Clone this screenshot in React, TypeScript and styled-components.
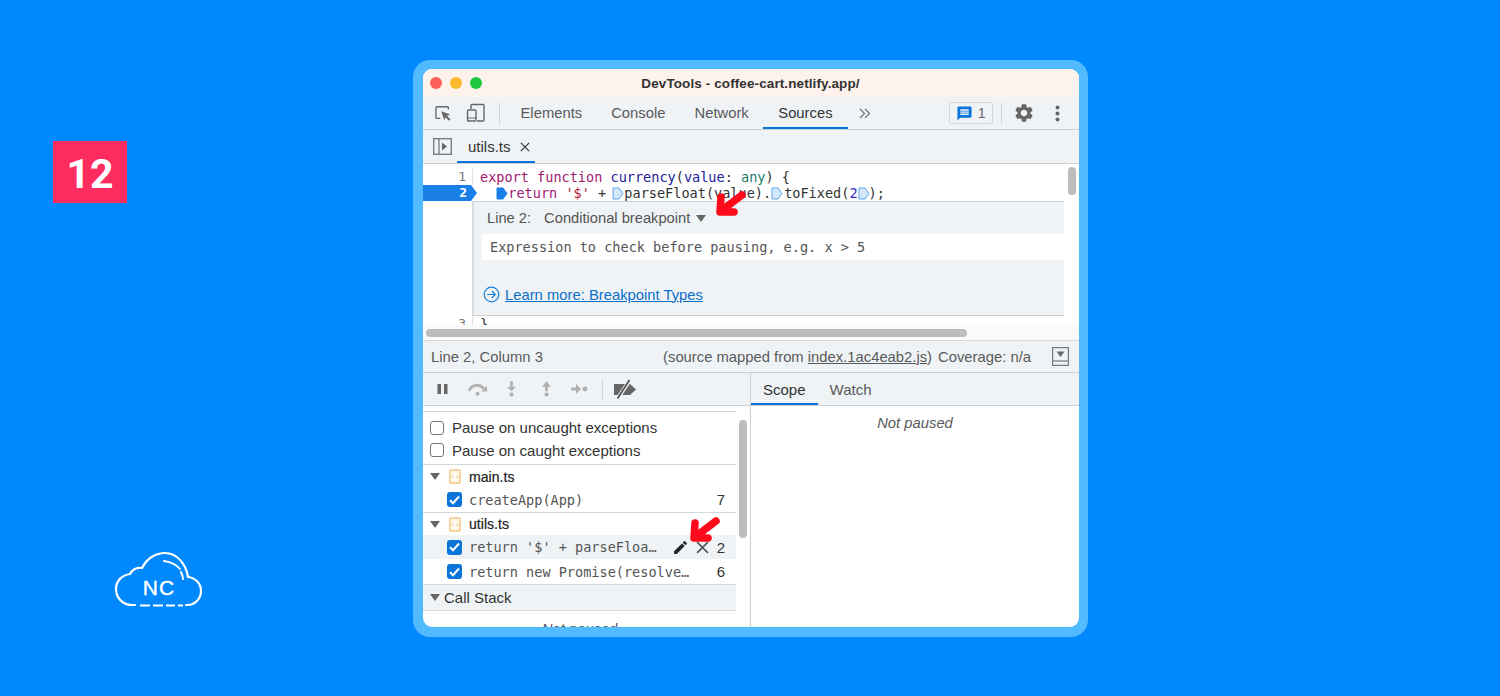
import React from 'react'
import styled, { createGlobalStyle } from 'styled-components'
import { MdSettings, MdEdit, MdMessage } from 'react-icons/md'

const GlobalStyle = createGlobalStyle`
  html, body {
    margin: 0;
    padding: 0;
    background: #0088ff;
    font-family: "Liberation Sans", Arial, sans-serif;
  }
`

const Page = styled.div`
  position: relative;
  width: 1500px;
  height: 696px;
  overflow: hidden;
  background: #0088ff;
  display: flex;
  align-items: center;
  justify-content: center;
`

const Badge = styled.div`
  position: absolute;
  left: 53px;
  top: 141px;
  width: 74px;
  height: 62px;
  box-sizing: border-box;
  padding-top: 3px;
  background: #ff2d5f;
  color: #fff;
  font-family: Roboto, "Liberation Sans", sans-serif;
  font-size: 41px;
  font-weight: 700;
  display: flex;
  align-items: center;
  justify-content: center;
`

const Logo = styled.svg`
  position: absolute;
  left: 105px;
  top: 540px;
`

const Frame = styled.div`
  width: 656px;
  height: 558px;
  padding: 9px 9px 10px 10px;
  margin: 1px 0 0 1px;
  background: #52bbff;
  border-radius: 17px;
  flex: none;
`

const Win = styled.div`
  position: relative;
  height: 558px;
  border-radius: 9px;
  overflow: hidden;
  background: #fff;
  display: flex;
  flex-direction: column;
`

const TitleBar = styled.div`
  height: 28px;
  flex: none;
  background: #fdf2ec;
  display: flex;
  align-items: center;
  padding-left: 7px;
  position: relative;
`

const Light = styled.span<{ $c: string }>`
  width: 12px;
  height: 12px;
  border-radius: 50%;
  background: ${p => p.$c};
  margin-right: 8px;
`

const Title = styled.div`
  flex: 1;
  text-align: center;
  font-size: 13.5px;
  font-weight: 700;
  color: #333;
  padding-right: 68px;
  letter-spacing: 0.1px;
`

const Bar = styled.div<{ $h: number }>`
  height: ${p => p.$h}px;
  flex: none;
  box-sizing: border-box;
  background: #eff3f6;
  border-bottom: 1px solid #ccd0d3;
  display: flex;
  align-items: stretch;
`

const IconCell = styled.div<{ $w: number; $ml?: number }>`
  width: ${p => p.$w}px;
  margin-left: ${p => p.$ml || 0}px;
  flex: none;
  display: flex;
  align-items: center;
  justify-content: center;
  color: #666;
`

const Divider = styled.div<{ $ml: number; $mr: number }>`
  width: 1px;
  height: 21px;
  align-self: center;
  background: #cfd3d6;
  margin: 0 ${p => p.$mr}px 0 ${p => p.$ml}px;
  flex: none;
`

const Tab = styled.div<{ $on?: boolean; $size?: number; $px?: number }>`
  padding: 0 ${p => p.$px ?? 14.5}px;
  display: flex;
  align-items: center;
  font-size: ${p => p.$size || 14.8}px;
  color: ${p => (p.$on ? '#333' : '#5a5a5a')};
  box-shadow: ${p => (p.$on ? 'inset 0 -2px 0 #0b74d9' : 'none')};
  white-space: nowrap;
`

const FileTab = styled(Tab)`
  margin-left: 5px;
  padding: 0 5px 0 11px;
`

const Close = styled.span`
  margin-left: 9px;
  display: flex;
`

const IssueButton = styled.div`
  width: 44px;
  height: 22px;
  box-sizing: border-box;
  align-self: center;
  margin-left: 78px;
  border: 1px solid #d5d9dc;
  border-radius: 2px;
  display: flex;
  align-items: center;
  justify-content: center;
  gap: 5px;
  font-size: 14px;
  color: #666;
`

const Editor = styled.div`
  position: relative;
  height: 176px;
  flex: none;
  overflow: hidden;
  padding-top: 5px;
  box-sizing: border-box;
  background: #fff;
  font-family: "DejaVu Sans Mono", "Liberation Mono", monospace;
  font-size: 13.55px;
`

const CodeLine = styled.div`
  height: 16px;
  line-height: 16px;
  display: flex;
  white-space: pre;
`

const LineNo = styled.div<{ $bp?: boolean }>`
  width: ${p => (p.$bp ? 54 : 50)}px;
  flex: none;
  box-sizing: border-box;
  text-align: right;
  padding-right: ${p => (p.$bp ? 10 : 6)}px;
  font-size: 13px;
  margin-right: ${p => (p.$bp ? 3 : 7)}px;
  color: ${p => (p.$bp ? '#fff' : '#777')};
  border-right: ${p => (p.$bp ? 'none' : '1px solid #dfe2e4')};
  background: ${p => (p.$bp ? '#1a80e8' : 'transparent')};
  font-weight: ${p => (p.$bp ? 700 : 400)};
  clip-path: ${p => (p.$bp ? 'polygon(0 0, 48px 0, 54px 50%, 48px 100%, 0 100%)' : 'none')};
`

const Kw = styled.span`
  color: #a3186f;
`
const Fn = styled.span`
  color: #1c1c9c;
`
const Ty = styled.span`
  color: #1a7c6c;
`
const Str = styled.span`
  color: #b5193a;
`
const Num = styled.span`
  color: #3a2fc2;
`
const Plain = styled.span`
  color: #333;
`

const Marker = styled.svg<{ $adv: number; $ml?: number }>`
  display: inline-block;
  vertical-align: -2px;
  width: 12px;
  height: 13px;
  margin-left: ${p => p.$ml || 0}px;
  margin-right: ${p => p.$adv - 12 - (p.$ml || 0)}px;
`

const Widget = styled.div`
  height: 115px;
  margin: 0 15px 0 49px;
  box-sizing: border-box;
  background: #eff3f6;
  border-top: 1px solid #ccd0d3;
  border-bottom: 1px solid #ccd0d3;
  border-left: 2px solid #d8dcdf;
  display: flex;
  flex-direction: column;
  padding-left: 8px;
  font-family: "Liberation Sans", Arial, sans-serif;
`

const WidgetHead = styled.div`
  height: 32px;
  flex: none;
  display: flex;
  align-items: center;
  font-size: 14.7px;
  color: #555;
  padding-left: 5px;
`

const ModeLabel = styled.span`
  margin-left: 13px;
`

const Caret = styled.span<{ $ml?: number }>`
  width: 0;
  height: 0;
  flex: none;
  border-left: 5px solid transparent;
  border-right: 5px solid transparent;
  border-top: 7px solid #666;
  margin-left: ${p => p.$ml || 0}px;
`

const ExprInput = styled.div`
  height: 26px;
  flex: none;
  background: #fff;
  display: flex;
  align-items: center;
  padding-left: 8px;
  font-family: "DejaVu Sans Mono", "Liberation Mono", monospace;
  font-size: 13.55px;
  color: #555;
`

const LearnMore = styled.div`
  display: flex;
  align-items: center;
  gap: 5px;
  margin-top: 26px;
  padding-left: 1px;
  font-size: 14.8px;
  color: #0b6fc9;
  text-decoration: underline;
`

const HScroll = styled.div`
  position: absolute;
  left: 3px;
  bottom: 3px;
  width: 541px;
  height: 8px;
  border-radius: 4px;
  background: #bdbdbd;
`

const HTrack = styled.div`
  position: absolute;
  left: 0;
  right: 0;
  bottom: 0;
  height: 15px;
  background: #fafafa;
`

const VScroll = styled.div`
  position: absolute;
  right: 3px;
  top: 3px;
  width: 8px;
  height: 28px;
  border-radius: 4px;
  background: #bdbdbd;
`

const Status = styled(Bar)`
  align-items: center;
  padding: 0 10px 0 8px;
  border-top: 1px solid #d5d9dc;
  font-size: 14.8px;
  color: #5a5a5a;
`

const Spacer = styled.div`
  flex: 1;
`

const Underlined = styled.span`
  text-decoration: underline;
`

const Coverage = styled.span`
  margin-left: 6px;
`

const Debugger = styled.div`
  flex: 1;
  min-height: 0;
  display: grid;
  grid-template-columns: 328px 1fr;
`

const LeftPane = styled.div`
  display: flex;
  flex-direction: column;
  border-right: 1px solid #ccd0d3;
  min-height: 0;
  overflow: hidden;
`

const RightPane = styled.div`
  display: flex;
  flex-direction: column;
  min-height: 0;
`

const Paused = styled.div<{ $pt: number }>`
  text-align: center;
  font-style: italic;
  font-size: 14.8px;
  color: #5a5a5a;
  padding-top: ${p => p.$pt}px;
`

const ListWrap = styled.div`
  position: relative;
  flex: 1;
  min-height: 0;
  overflow: hidden;
  padding-right: 14px;
`

const ListThumb = styled.div`
  position: absolute;
  right: 3px;
  top: 14px;
  width: 8px;
  height: 118px;
  border-radius: 4px;
  background: #bdbdbd;
`

const Section = styled.div<{ $h: number; $pt?: number }>`
  height: ${p => p.$h}px;
  box-sizing: border-box;
  padding-top: ${p => p.$pt || 0}px;
  border-bottom: 1px solid #d5d9dc;
`

const Row = styled.div<{ $h: number; $hover?: boolean }>`
  height: ${p => p.$h}px;
  display: flex;
  align-items: center;
  padding-left: 7px;
  font-size: 15px;
  color: #333;
  background: ${p => (p.$hover ? '#eff3f6' : 'transparent')};
`

const BreakRow = styled(Row)`
  padding-left: 0;
`

const Box = styled.span`
  width: 14px;
  height: 14px;
  box-sizing: border-box;
  border: 1px solid #777;
  border-radius: 3px;
  background: #fff;
  margin-right: 8px;
  flex: none;
`

const Checked = styled.span`
  width: 15px;
  height: 15px;
  border-radius: 3px;
  background: #0b74d9;
  margin: 0 8px 0 24px;
  flex: none;
  display: flex;
  align-items: center;
  justify-content: center;
`

const Mono = styled.span`
  font-family: "DejaVu Sans Mono", "Liberation Mono", monospace;
  font-size: 13.55px;
  color: #555;
  white-space: pre;
  margin-left: -1px;
`

const LineRef = styled.span`
  margin-left: auto;
  margin-right: 11px;
  font-size: 15px;
  color: #333;
`

const FileGroup = styled.span`
  margin-left: 9px;
  display: flex;
  align-items: center;
`

const FileName = styled.span`
  font-size: 14.1px;
  color: #222;
  margin-left: 8px;
  -webkit-text-stroke: 0.2px #222;
`

const HoverIcons = styled.span`
  margin-left: 15px;
  display: flex;
  align-items: center;
  gap: 7px;
  color: #222;
`

const HeadRow = styled.div`
  height: 26px;
  box-sizing: border-box;
  background: #eff3f6;
  border-bottom: 1px solid #d5d9dc;
  display: flex;
  align-items: center;
  gap: 4px;
  padding-left: 7px;
  font-size: 15px;
  color: #333;
`

const Arrow = styled.svg<{ $x: number; $y: number }>`
  position: absolute;
  left: ${p => p.$x}px;
  top: ${p => p.$y}px;
  pointer-events: none;
`

const RedArrow = ({ x, y }: { x: number; y: number }) => (
  <Arrow $x={x} $y={y} width="32" height="28" viewBox="0 0 32 28" fill="none">
    <path
      d="M6 7 L5 22 L19 22 M6 21 L27 5"
      stroke="#ff0a1a"
      strokeWidth="7.5"
      strokeLinecap="round"
      strokeLinejoin="round"
    />
  </Arrow>
)

const BpMarker = ({ solid, adv, ml }: { solid?: boolean; adv: number; ml?: number }) => (
  <Marker viewBox="0 0 12 13" $adv={adv} $ml={ml}>
    <path
      d="M1 1 H7 L11 6.5 L7 12 H1 Z"
      fill={solid ? '#1a80e8' : '#d4e6fa'}
      stroke={solid ? '#1a80e8' : '#5ea5ea'}
    />
  </Marker>
)

const FileIcon = () => (
  <svg width="12" height="15" viewBox="0 0 12 15" fill="none">
    <rect x="1" y="1" width="10" height="13" rx="1" fill="#fff8ec" stroke="#f5c57e" strokeWidth="1.5" />
    <path d="M4.5 7 L3.4 8 L4.5 9 M7.5 7 L8.6 8 L7.5 9" stroke="#f2b45c" strokeWidth="0.9" />
  </svg>
)

const Tick = () => (
  <svg width="11" height="10" viewBox="0 0 11 10" fill="none">
    <path d="M1 5.2 L4 8.2 L10 1.5" stroke="#fff" strokeWidth="2" />
  </svg>
)

const XIcon = ({ size, color, w }: { size: number; color: string; w: number }) => (
  <svg width={size} height={size} viewBox="0 0 12 12" fill="none">
    <path d="M1 1 L11 11 M11 1 L1 11" stroke={color} strokeWidth={w} />
  </svg>
)

const App: React.FC = () => {
  return (
    <Page>
      <GlobalStyle />
      <Badge>12</Badge>
      <Logo width="110" height="80" viewBox="0 0 110 80" fill="none">
        <path
          d="M30 65 H27 C18 65 11 58 11 49 C11 41 17 35 25 34 C27 30 31 27 37 28 C42 18 51 13 60 13 C72 13 81 24 83 37 C91 38 96 44 96 51 C96 59 90 65 82 65 H81"
          stroke="#fff"
          strokeWidth="2.2"
          strokeLinecap="round"
        />
        <path d="M35 65.5 H45 M48 65.5 H58 M61 65.5 H70 M73 65.5 H78" stroke="#fff" strokeWidth="2.2" />
        <path d="M59 21 C66 22 71 24 75 29 M76 32 C77 34 78 36 78 39" stroke="#fff" strokeWidth="2" strokeLinecap="round" />
        <text x="54" y="55" textAnchor="middle" fill="#fff" fontFamily="Liberation Sans, Arial, sans-serif" fontSize="21" fontWeight="400" letterSpacing="1" stroke="#fff" strokeWidth="0.4">
          NC
        </text>
      </Logo>
      <Frame>
        <Win>
          <TitleBar>
            <Light $c="#fb5f57" />
            <Light $c="#febb2e" />
            <Light $c="#1ec93f" />
            <Title>DevTools - coffee-cart.netlify.app/</Title>
          </TitleBar>

          <Bar $h={33}>
            <IconCell $w={20} $ml={10}>
              <svg width="17" height="17" viewBox="0 0 19 19" fill="none">
                <path d="M6 15 H2 a1 1 0 0 1 -1 -1 V3 a1 1 0 0 1 1 -1 H14 a1 1 0 0 1 1 1 V5" stroke="#666" strokeWidth="1.5" />
                <path d="M7 7 L17 10.5 L13.3 12 L17.2 16 L15.6 17.6 L11.8 13.6 L10.3 17 Z" fill="#666" />
              </svg>
            </IconCell>
            <IconCell $w={20} $ml={13}>
              <svg width="20" height="20" viewBox="0 0 20 20" fill="none">
                <path d="M5 6 V2.5 a1 1 0 0 1 1 -1 H17 a1 1 0 0 1 1 1 V17 a1 1 0 0 1 -1 1 H11" stroke="#666" strokeWidth="1.4" />
                <rect x="1.5" y="7" width="8.5" height="11" rx="1" stroke="#666" strokeWidth="1.4" />
                <path d="M2 15 H10" stroke="#666" strokeWidth="1.2" />
              </svg>
            </IconCell>
            <Divider $ml={13} $mr={6} />
            <Tab>Elements</Tab>
            <Tab>Console</Tab>
            <Tab>Network</Tab>
            <Tab $on $px={15}>Sources</Tab>
            <IconCell $w={12} $ml={11}>
              <svg width="12" height="11" viewBox="0 0 12 11" fill="none">
                <path d="M1 1 L5.5 5.5 L1 10 M6 1 L10.5 5.5 L6 10" stroke="#777" strokeWidth="1.3" />
              </svg>
            </IconCell>
            <IssueButton>
              <MdMessage size={17} color="#0b74d9" />1
            </IssueButton>
            <Divider $ml={8} $mr={0} />
            <IconCell $w={22} $ml={11}>
              <MdSettings size={22} color="#666" />
            </IconCell>
            <IconCell $w={6} $ml={20}>
              <svg width="5" height="17" viewBox="0 0 5 17">
                <circle cx="2.5" cy="2.5" r="2" fill="#666" />
                <circle cx="2.5" cy="8.5" r="2" fill="#666" />
                <circle cx="2.5" cy="14.5" r="2" fill="#666" />
              </svg>
            </IconCell>
          </Bar>

          <Bar $h={34}>
            <IconCell $w={20} $ml={9}>
              <svg width="19" height="17" viewBox="0 0 19 17" fill="none">
                <rect x="0.7" y="0.7" width="17.6" height="15.6" stroke="#777" strokeWidth="1.3" />
                <path d="M6 1 V16" stroke="#777" strokeWidth="1.3" />
                <path d="M9 4.5 L14 8.5 L9 12.5 Z" fill="#666" />
              </svg>
            </IconCell>
            <FileTab $on $size={15}>
              utils.ts
              <Close>
                <XIcon size={10} color="#333" w={1.4} />
              </Close>
            </FileTab>
          </Bar>

          <Editor>
            <CodeLine>
              <LineNo>1</LineNo>
              <span>
                <Kw>export function </Kw>
                <Fn>currency</Fn>
                <Plain>(</Plain>
                <Fn>value</Fn>
                <Plain>: </Plain>
                <Ty>any</Ty>
                <Plain>) {'{'}</Plain>
              </span>
            </CodeLine>
            <CodeLine>
              <LineNo $bp>2</LineNo>
              <span>
                <Plain>  </Plain>
                <BpMarker solid adv={12} />
                <Kw>return </Kw>
                <Str>'$'</Str>
                <Plain> + </Plain>
                <BpMarker adv={10} ml={-2} />
                <Plain>parseFloat(value).</Plain>
                <BpMarker adv={13} />
                <Plain>toFixed(</Plain>
                <Num>2</Num>
                <BpMarker adv={11} />
                <Plain>);</Plain>
              </span>
            </CodeLine>
            <Widget>
              <WidgetHead>
                Line 2:
                <ModeLabel>Conditional breakpoint</ModeLabel>
                <Caret $ml={6} />
              </WidgetHead>
              <ExprInput>Expression to check before pausing, e.g. x &gt; 5</ExprInput>
              <LearnMore>
                <svg width="17" height="17" viewBox="0 0 17 17" fill="none">
                  <circle cx="8.5" cy="8.5" r="7.3" stroke="#1a80d8" strokeWidth="1.2" />
                  <path d="M4 8.5 H12 M8.8 5 L12.3 8.5 L8.8 12" stroke="#1a80d8" strokeWidth="1.2" />
                </svg>
                Learn more: Breakpoint Types
              </LearnMore>
            </Widget>
            <CodeLine>
              <LineNo>3</LineNo>
              <Plain>{'}'}</Plain>
            </CodeLine>
            <HTrack />
            <HScroll />
            <VScroll />
          </Editor>

          <Status $h={33}>
            Line 2, Column 3
            <Spacer />
            (source mapped from&nbsp;<Underlined>index.1ac4eab2.js</Underlined>)
            <Coverage>Coverage: n/a</Coverage>
            <IconCell $w={17} $ml={21}>
              <svg width="17" height="19" viewBox="0 0 17 19" fill="none">
                <rect x="0.6" y="0.6" width="15.8" height="17.8" stroke="#777" strokeWidth="1.2" />
                <path d="M1 14 H16" stroke="#777" strokeWidth="1.2" />
                <path d="M4.5 4.5 H12.5 L8.5 10 Z" fill="#666" />
              </svg>
            </IconCell>
          </Status>

          <Debugger>
            <LeftPane>
              <Bar $h={33}>
                <IconCell $w={11} $ml={14}>
                  <svg width="11" height="10" viewBox="0 0 11 10">
                    <path d="M0.5 0 H4 V10 H0.5 Z M7 0 H10.5 V10 H7 Z" fill="#666" />
                  </svg>
                </IconCell>
                <IconCell $w={21} $ml={19}>
                  <svg width="21" height="14" viewBox="0 0 22 14" fill="none">
                    <path d="M2 9 C5 2 13 1 18 7" stroke="#b0b0b0" strokeWidth="3" />
                    <path d="M15 9.5 H21 V3.5 Z" fill="#b0b0b0" />
                    <circle cx="11" cy="12" r="2" fill="#b0b0b0" />
                  </svg>
                </IconCell>
                <IconCell $w={12} $ml={17}>
                  <svg width="11" height="16" viewBox="0 0 12 17" fill="none">
                    <path d="M6 0 V6" stroke="#b0b0b0" strokeWidth="3" />
                    <path d="M1 6 H11 L6 11 Z" fill="#b0b0b0" />
                    <circle cx="6" cy="14.5" r="2.3" fill="#b0b0b0" />
                  </svg>
                </IconCell>
                <IconCell $w={12} $ml={23}>
                  <svg width="11" height="16" viewBox="0 0 12 17" fill="none">
                    <path d="M6 5 V11" stroke="#b0b0b0" strokeWidth="3" />
                    <path d="M1 6 H11 L6 0 Z" fill="#b0b0b0" />
                    <circle cx="6" cy="14.5" r="2.3" fill="#b0b0b0" />
                  </svg>
                </IconCell>
                <IconCell $w={17} $ml={19}>
                  <svg width="17" height="10" viewBox="0 0 17 10" fill="none">
                    <path d="M0 5 H5" stroke="#b0b0b0" strokeWidth="3" />
                    <path d="M5 0 L10 5 L5 10 Z" fill="#b0b0b0" />
                    <circle cx="14" cy="5" r="2.4" fill="#b0b0b0" />
                  </svg>
                </IconCell>
                <Divider $ml={14} $mr={0} />
                <IconCell $w={24} $ml={10}>
                  <svg width="24" height="20" viewBox="0 0 24 20" fill="none">
                    <path d="M1 5 H17 L23 10.5 L17 16 H1 Z" fill="#666" />
                    <path d="M5 19 L17 1" stroke="#eff3f6" strokeWidth="4" />
                    <path d="M4.5 19.5 L16.5 1" stroke="#555" strokeWidth="1.8" />
                  </svg>
                </IconCell>
              </Bar>
              <ListWrap>
                <Section $h={6} />
                <Section $h={53} $pt={4}>
                  <Row $h={23}>
                    <Box />
                    Pause on uncaught exceptions
                  </Row>
                  <Row $h={22}>
                    <Box />
                    Pause on caught exceptions
                  </Row>
                </Section>
                <Section $h={48}>
                  <Row $h={23}>
                    <Caret />
                    <FileGroup>
                      <FileIcon />
                      <FileName>main.ts</FileName>
                    </FileGroup>
                  </Row>
                  <BreakRow $h={23}>
                    <Checked>
                      <Tick />
                    </Checked>
                    <Mono>createApp(App)</Mono>
                    <LineRef>7</LineRef>
                  </BreakRow>
                </Section>
                <Section $h={72}>
                  <Row $h={22}>
                    <Caret />
                    <FileGroup>
                      <FileIcon />
                      <FileName>utils.ts</FileName>
                    </FileGroup>
                  </Row>
                  <BreakRow $h={24} $hover>
                    <Checked>
                      <Tick />
                    </Checked>
                    <Mono>return '$' + parseFloa…</Mono>
                    <HoverIcons>
                      <MdEdit size={17} color="#222" />
                      <XIcon size={13} color="#555" w={1.5} />
                    </HoverIcons>
                    <LineRef>2</LineRef>
                  </BreakRow>
                  <BreakRow $h={25}>
                    <Checked>
                      <Tick />
                    </Checked>
                    <Mono>return new Promise(resolve…</Mono>
                    <LineRef>6</LineRef>
                  </BreakRow>
                </Section>
                <HeadRow>
                  <Caret />
                  Call Stack
                </HeadRow>
                <Paused $pt={10}>Not paused</Paused>
                <ListThumb />
              </ListWrap>
            </LeftPane>
            <RightPane>
              <Bar $h={33}>
                <Tab $on $size={15} $px={12}>Scope</Tab>
                <Tab $size={15} $px={12}>Watch</Tab>
              </Bar>
              <Paused $pt={9}>Not paused</Paused>
            </RightPane>
          </Debugger>

          <RedArrow x={292} y={121} />
          <RedArrow x={266} y={447} />
        </Win>
      </Frame>
    </Page>
  )
}

export default App
